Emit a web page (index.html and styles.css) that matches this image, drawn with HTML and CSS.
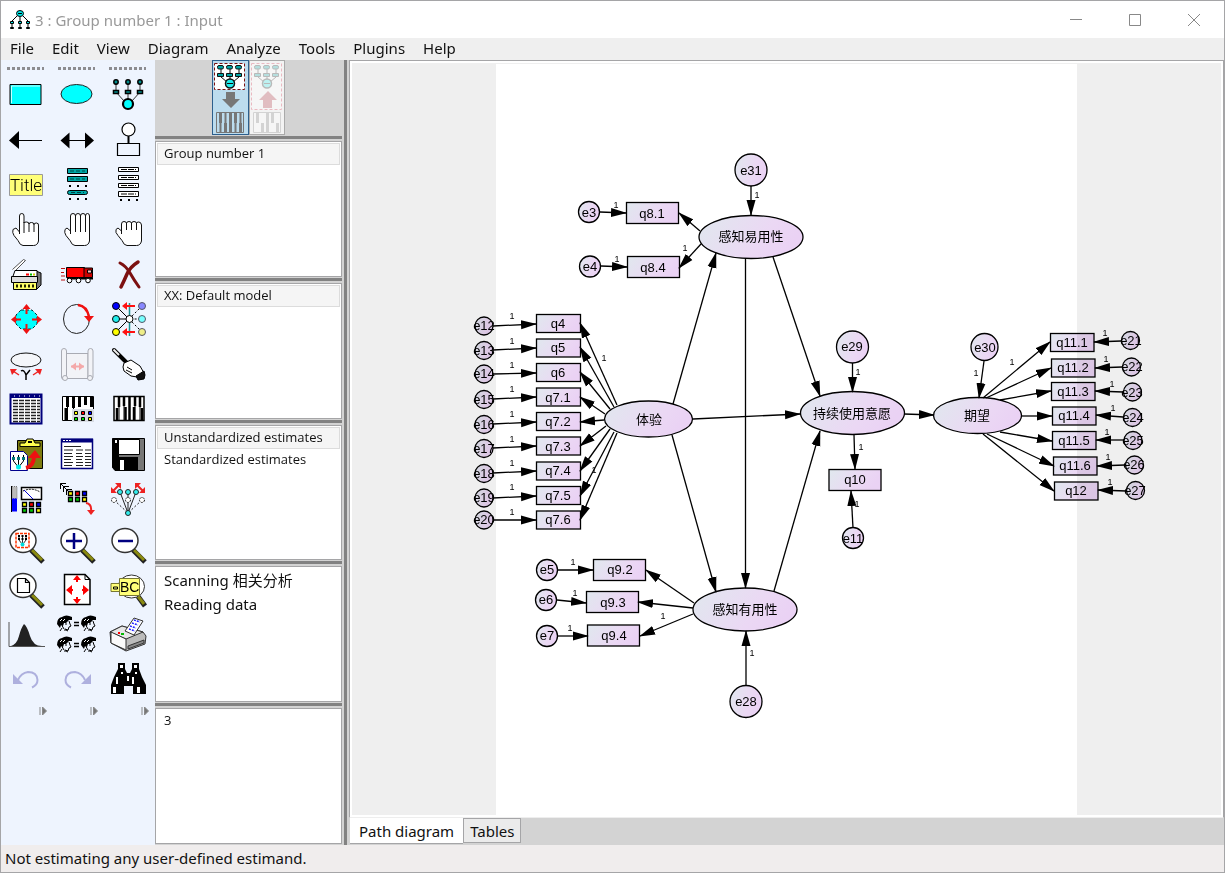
FILE: index.html
```html
<!DOCTYPE html>
<html lang="en">
<head>
  <meta charset="UTF-8">
  <meta name="viewport" content="width=device-width, initial-scale=1.0">
  <title>3 : Group number 1 : Input</title>
  <link rel="stylesheet" href="styles.css">
</head>
<body>
  <div class="window">
    <header class="titlebar">
      <svg class="app-icon" width="22" height="22" viewBox="0 0 22 22" fill="#00e5e5" stroke="#000">
        <path d="M8 7L3 12M11 8v5M14 7l5 5M3 14v5M11 14v5M19 14v5" fill="none"/>
        <ellipse cx="11" cy="4.500" rx="3.500" ry="3"/><path d="M9 4.500h4"/>
        <path d="M1.500 12.500h3v2h-3zM9.500 12.500h3v2h-3zM17.500 12.500h3v2h-3z"/>
        <path d="M1.500 18.500h3v1h-3zM9.500 18.500h3v1h-3zM17.500 18.500h3v1h-3z"/>
      </svg>
      <h1>3 : Group number 1 : Input</h1>
      <div class="win-buttons">
        <button aria-label="Minimize"><svg width="14" height="14"><path d="M1 6.500h12"/></svg></button>
        <button aria-label="Maximize"><svg width="14" height="14"><path d="M1.500 1.500h11v11h-11z"/></svg></button>
        <button aria-label="Close"><svg width="14" height="14"><path d="M1 1l12 12M13 1L1 13"/></svg></button>
      </div>
    </header>
    <nav class="menu">
      <button>File</button>
      <button>Edit</button>
      <button>View</button>
      <button>Diagram</button>
      <button>Analyze</button>
      <button>Tools</button>
      <button>Plugins</button>
      <button>Help</button>
    </nav>

    <main class="work">
      <aside class="toolbox">
        <div class="grips"><i></i><i></i><i></i></div>
        <div class="tools">
          <button aria-label="Observed variable"><svg viewBox="0 0 40 40"><path d="M4 9.500h31v20H4z" fill="#0ff" stroke="#000"/><path d="M5.500 28V11H34" fill="none" stroke="#cff"/></svg></button>
          <button aria-label="Unobserved variable"><svg viewBox="0 0 40 40"><ellipse cx="19.500" cy="19" rx="15.500" ry="9.500" fill="#0ff" stroke="#222"/></svg></button>
          <button aria-label="Latent variable with indicators"><svg viewBox="0 0 40 40" stroke="#000"><path d="M8 7v10l8 9M20 7v18M32 7v10l-8 9" fill="none" stroke="#333"/><g fill="#008c8c" stroke-width="1.500"><circle cx="8" cy="7" r="2.200"/><circle cx="20" cy="7" r="2.200"/><circle cx="32" cy="7" r="2.200"/><path d="M5.500 15.500h5v3h-5zM17.500 15.500h5v3h-5zM29.500 15.500h5v3h-5z"/></g><circle cx="20" cy="29" r="5" fill="#0ff" stroke-width="2.200"/></svg></button>

          <button aria-label="Path"><svg viewBox="0 0 40 40"><path d="M10 20.500h26" stroke="#000"/><path d="M3 20.500L13 11v18z"/></svg></button>
          <button aria-label="Covariance"><svg viewBox="0 0 40 40"><path d="M10 20.500h20" stroke="#000"/><path d="M3.500 20.500l9-8v16zM37 20.500l-9-8v16z"/></svg></button>
          <button aria-label="Error variable"><svg viewBox="0 0 40 40" fill="#fff" stroke="#000" stroke-width="1.200"><circle cx="20.500" cy="9.500" r="6.500"/><path d="M20.500 16v8" stroke-width="2"/><path d="M9.500 23.500h22v12h-22z" fill="#eef4fe"/></svg></button>

          <button aria-label="Figure caption"><svg viewBox="0 0 40 40"><path d="M3.500 9.500h33v21h-33z" fill="#ffff78" stroke="#999"/><text class="caption-text" x="20" y="26" text-anchor="middle">Title</text></svg></button>
          <button aria-label="Variables in model"><svg viewBox="0 0 40 40" fill="#00a8a8" stroke="#000"><path d="M10.500 3.500h20v5h-20zM10.500 11.500h20v5h-20z"/><rect x="10.500" y="25.500" width="20" height="4" rx="2"/><path d="M12 21h18M12 34h18" stroke-width="2" stroke-dasharray="2 6"/><path d="M13 6h15M13 14h15M14 27.500h13" stroke="#044" stroke-dasharray="4 2"/></svg></button>
          <button aria-label="Variables in data set"><svg viewBox="0 0 40 40" fill="#fff" stroke="#000"><path d="M10.500 2.500h20v4h-20zM10.500 10.500h20v4h-20zM10.500 18.500h20v4h-20zM10.500 26.500h20v5h-20z"/><path d="M13 4.500h15M13 12.500h15M13 20.500h15M13 29h15" stroke-dasharray="6 1"/><path d="M12 35h18" stroke-width="2" stroke-dasharray="2 6"/></svg></button>

          <button aria-label="Select one object"><svg viewBox="0 0 40 40" fill="#fff" stroke="#111"><path d="M13.500 24V6q0-2.500 2.300-2.500T18 6v7q0-1 2.500-1t2.500 2q0-1.500 2.500-1.500t2.500 2q0-1.500 2.500-1.500T32.500 16v15q-1 4.500-5 4.500H17q-3 0-5-5l-4-5q-2-3-1-6l3-1.500 3.500 4M18 12v11M23 13v9M28 14v8"/></svg></button>
          <button aria-label="Select all objects"><svg viewBox="0 0 40 40" fill="#fff" stroke="#111"><path d="M13.500 24V6q0-2.500 2.500-2.500T18.500 6q0-2.500 2.500-2.500T23.500 6q0-2.500 2.500-2.500T28.500 6q0-2.500 2-2.500T32.500 6v25q-1 4.500-5 4.500H18q-3 0-5-5l-4-5q-2-3-1-6l2-1.500 3.500 3M18.500 6v16M23.500 6v16M28.500 6v16"/></svg></button>
          <button aria-label="Deselect all objects"><svg viewBox="0 0 40 40" fill="#fff" stroke="#111"><path d="M13.500 24V14q0-2.500 2.500-2.500t2.500 2q0-2 2.500-2t2.500 2q0-2 2.500-2t2.500 2q0-1.500 2.300-1.500T33.500 15v16q-1 4.500-5 4.500H19q-3 0-5-5l-4-5q-3-3-2-6l2-1.500 3.500 3M18.500 13v7M23.500 13v7M28.500 13v7"/></svg></button>

          <button aria-label="Duplicate objects"><svg viewBox="0 0 40 40" stroke="#000"><path d="M30 16l5 2v12l-5 5" fill="#777"/><path d="M6.500 14.500l11-10 2 1-10 10" fill="#fff" stroke="#555"/><path d="M5.500 25.500L9 15.500h22v10z" fill="#fff"/><path d="M5.500 21.500h26v6h-26z" fill="#ddd"/><path d="M7.500 27.500h23v7h-23z" fill="#ff6"/><path d="M10 31h18" stroke="#220" stroke-width="3" stroke-dasharray="2 2"/><path d="M20 19.500h3" stroke="red" stroke-width="2"/><path d="M24 19.500h2" stroke="#0b0" stroke-width="2"/><path d="M27 19.500h2" stroke="#cc0" stroke-width="2"/></svg></button>
          <button aria-label="Move objects"><svg viewBox="0 0 40 40" stroke="#000"><path d="M9.500 12.500h18v10h-18z" fill="#f00"/><path d="M27 13h8.500v9.500H27z" fill="#c00"/><path d="M30.500 15h4v3h-4z" fill="#fbb"/><path d="M10 23.500h26" stroke-width="2"/><g fill="#fff"><circle cx="12.500" cy="25.500" r="2.300"/><circle cx="21.500" cy="25.500" r="2.300"/><circle cx="31" cy="25.500" r="2.300"/></g><path d="M4 13.500h4M4 17.500h3M4 21h4M4 25h4" stroke="#b11"/></svg></button>
          <button aria-label="Erase objects"><svg viewBox="0 0 40 40" fill="none" stroke="#7c1010" stroke-linecap="round"><path d="M12 8q6 3 10 10t9 14" stroke-width="3"/><path d="M30 7q-8 5-11 12t-6 13" stroke-width="3.500"/></svg></button>

          <button aria-label="Change the shape of objects"><svg viewBox="0 0 40 40"><path d="M15 10h11l5 5v9l-5 5H15l-5-5v-9z" fill="#0ff" stroke="#033" stroke-dasharray="3 2"/><g fill="#e11"><path d="M20.500 4l4 5h-3v5h-2V9h-3zM20.500 34l4-5h-3v-5h-2v5h-3zM5 19.500l5-4v3h5v2h-5v3zM36 19.500l-5-4v3h-5v2h5v3z"/></g></svg></button>
          <button aria-label="Rotate indicators"><svg viewBox="0 0 40 40" fill="none"><ellipse cx="19.500" cy="19" rx="13" ry="14.500" stroke="#222"/><path d="M21 5q9 1 11 12" stroke="#f01010" stroke-width="2.500"/><path d="M27 16h10l-5 6z" fill="#f01010"/></svg></button>
          <button aria-label="Reflect indicators"><svg viewBox="0 0 40 40" stroke="#000"><path d="M21.500 3v33" stroke="#1a9090" stroke-width="1.500"/><path d="M8 6l13 13M8 19h13M8 32l13-13"/><path d="M34 6L21 19h13M34 32L21 19" fill="none" stroke-dasharray="2 2"/><circle cx="8" cy="6" r="3.500" fill="#00f"/><circle cx="8" cy="19" r="3.500" fill="#2ee"/><circle cx="8" cy="32" r="3.500" fill="#ff0"/><g stroke="#556"><circle cx="34" cy="6" r="3.500" fill="#88f"/><circle cx="34" cy="19" r="3.500" fill="#7ff"/><circle cx="34" cy="32" r="3.500" fill="#ee8"/></g><circle cx="21.500" cy="19" r="3.500" fill="#fff"/><path d="M27 6H17M27 32H17" stroke="#f11" stroke-width="2"/><path d="M14 6l5-4v8zM14 32l5-4v8z" fill="#f11" stroke="none"/></svg></button>

          <button aria-label="Move parameter values"><svg viewBox="0 0 40 40"><ellipse cx="20" cy="15" rx="15" ry="7" fill="#f4f6fa" stroke="#111"/><path d="M15 26q3-2 5 4l4-5M20 30v5" fill="none" stroke="#000" stroke-width="1.500"/><path d="M13 30l-6-4M27 30l6-4" stroke="#e22" stroke-width="1.500"/><path d="M4 24h7l-5 6zM36 24h-7l5 6z" fill="#e22"/></svg></button>
          <button aria-label="Reposition diagram"><svg viewBox="0 0 40 40" fill="#f2f3f7" stroke="#a9abb3"><path d="M9 8.500h22v25H9z"/><rect x="4.500" y="3.500" width="5" height="31" rx="2.500"/><rect x="31" y="3.500" width="5" height="31" rx="2.500"/><circle cx="8" cy="33" r="2.500"/><circle cx="33" cy="33" r="2.500"/><path d="M14 21.500h13" stroke="#f4a9a9" stroke-width="2"/><path d="M14 21.500l5-4v8zM27 21.500l-5-4v8z" fill="#f4a9a9" stroke="none"/></svg></button>
          <button aria-label="Touch up a variable"><svg viewBox="0 0 40 40" stroke="#000"><path d="M6 5l13 13" stroke-width="4" stroke-linecap="round"/><path d="M5.500 4.500L11 10" stroke="#eee" stroke-width="2"/><path d="M16 18l7-3 9 6 4 7-7 4-6-1-7-5-1-4z" fill="#fff"/><path d="M19 22l5 3M18 25l6 3"/><path d="M28 31l8-5q2 4 0 8l-6 1z" fill="#111"/></svg></button>

          <button aria-label="Select data files"><svg viewBox="0 0 40 40"><path d="M4.500 4.500h31v29h-31z" fill="#fff" stroke="#00007c" stroke-width="2"/><path d="M4 6h32" stroke="#00007c" stroke-width="4"/><path d="M8 6h26" stroke="#fff" stroke-dasharray="1 4"/><path d="M7 10.500h27M7 13.500h27M7 16.500h27M7 19.500h27M7 22.500h27M7 25.500h27M7 28.500h27M7 31.500h27" stroke="#222" stroke-width="1.300" stroke-dasharray="5 1"/></svg></button>
          <button aria-label="Analysis properties"><svg viewBox="0 0 40 40"><path d="M5.500 6.500h31v24h-31z" fill="#fff" stroke="#000"/><path d="M10.500 7v24M16.500 7v24M22.500 7v8M28.500 7v8M34.500 7v8" stroke="#000"/><path d="M10.500 7v10M9 18v13M16.500 7v11M22.500 7v10M28.500 7v8M34.500 7v10" stroke="#000" stroke-width="3"/><path d="M15 19h22v13H15z" fill="#d8dce4"/><g stroke="#000"><path d="M17.500 21.500h3v3h-3z" fill="#ff0"/><path d="M24.500 21.500h3v3h-3z" fill="#f00"/><path d="M31.500 21.500h3v3h-3z" fill="#00f"/><path d="M17.500 27.500h3v3h-3zM24.500 27.500h3v3h-3z" fill="#0d0"/><path d="M31.500 27.500h3v3h-3z" fill="#ff0"/></g></svg></button>
          <button aria-label="Calculate estimates"><svg viewBox="0 0 40 40"><path d="M6 6.500h30v24H6z" fill="#fff" stroke="#000" stroke-width="1.500"/><path d="M11 7v24M16 7v24M21.500 7v24M27 7v24M32 7v24" stroke="#000"/><path d="M11 7v10M9 18v13M16 7v9M17.500 17v14M21.500 7v24M27 7v9M26 17v14M32 7v10M34 18v13" stroke="#000" stroke-width="2.500"/></svg></button>

          <button aria-label="Copy the path diagram"><svg viewBox="0 0 40 40" stroke="#000"><path d="M11.500 5.500h25v28h-25z" fill="#7d7d10"/><path d="M14 11.500V8h5l2-4h6l2 4h5v3.500z" fill="#ffff50"/><path d="M22 7h4" stroke-width="2"/><path d="M4.500 16.500h13l4 4v15h-17z" fill="#fff" stroke="#00008c"/><path d="M7.500 20v6l4 5M12.500 20v10M17.500 20v6l-4 5" fill="none"/><path d="M6 22h3v3H6zM11 22h3v3h-3zM16 22h3v3h-3z" fill="#077" stroke="none"/><circle cx="12.500" cy="32" r="2.500" fill="#0ee" stroke="none"/><path d="M20 33q8-2 8-12" fill="none" stroke="#e11" stroke-width="4"/><path d="M22 23l7-8 6 8z" fill="#e11" stroke="none"/></svg></button>
          <button aria-label="View text"><svg viewBox="0 0 40 40"><path d="M4.500 4.500h31v29h-31z" fill="#fff" stroke="#00007c" stroke-width="1.500"/><path d="M4 5.500h32" stroke="#00007c" stroke-width="4"/><path d="M6 5.500h8" stroke="#fff" stroke-dasharray="2 1"/><path d="M7 11.500h17M7 15h9M19 15h7M28 15h6M7 18.500h8M19 18.500h6M28 18.500h6M7 21.500h9M19 21.500h7M28 21.500h6M7 24.500h7M19 24.500h6M28 24.500h6M7 27.500h9M19 27.500h7M28 27.500h6M7 30.500h8M19 30.500h7M28 30.500h6" stroke="#222" stroke-width="1.200"/></svg></button>
          <button aria-label="Save the path diagram"><svg viewBox="0 0 40 40"><path d="M4.500 3.500h32v32H7l-2.500-3z" fill="#777" stroke="#000"/><path d="M4.500 3.500H11v32H7l-2.500-3z"/><path d="M10.500 4.500h21v15h-21z" fill="#fff" stroke="#000"/><path d="M10 22h20v14H10z"/><path d="M12 25h4v10h-4z" fill="#fff"/><path d="M7 5h2v3H7z" fill="#fff"/></svg></button>

          <button aria-label="Object properties"><svg viewBox="0 0 40 40" stroke="#000"><path d="M6 6.500h5v12H6z" fill="#bbb" stroke="#777" stroke-dasharray="1 1"/><path d="M6 18.500h5v13H6z" fill="#00f" stroke="none"/><path d="M5.500 6v26"/><path d="M15.500 7.500h20v12h-20z" fill="#fff" stroke-width="1.500"/><path d="M17 11q9-4 17 1" fill="none" stroke-dasharray="2 1"/><path d="M18 10l9 9" stroke="#00c"/><g stroke-width="1.300"><path d="M16.500 22.500h4v4h-4z" fill="#ff0"/><path d="M23.500 22.500h4v4h-4z" fill="#f00"/><path d="M30.500 22.500h4v4h-4z" fill="#00f"/><path d="M16.500 28.500h4v4h-4zM23.500 28.500h4v4h-4z" fill="#0c0"/><path d="M30.500 28.500h4v4h-4z" fill="#ff0"/></g></svg></button>
          <button aria-label="Drag properties"><svg viewBox="0 0 40 40" stroke="#000"><path d="M3.500 9V3.500H9M6.500 12V6.500H12M9.500 15V9.500H15M3.500 3.500l5 5M7 7l5 5" fill="none"/><g stroke-width="1.300"><path d="M11.500 11.500h4v4h-4z" fill="#ff0"/><path d="M18.500 11.500h4v4h-4z" fill="#f00"/><path d="M25.500 11.500h4v4h-4z" fill="#00f"/><path d="M11.500 17.500h4v4h-4zM18.500 17.500h4v4h-4z" fill="#0c0"/><path d="M25.500 17.500h4v4h-4z" fill="#ff0"/></g><path d="M29 23q6 1 5 8" fill="none" stroke="#e22" stroke-width="2"/><path d="M30 30h8l-4 5z" fill="#e22" stroke="none"/></svg></button>
          <button aria-label="Preserve symmetries"><svg viewBox="0 0 40 40" stroke="#222"><path d="M12 12l8 21 8-21M20 12v21" fill="none"/><path d="M6 20l14 13 14-13" fill="none" stroke-dasharray="2 2"/><g fill="#3ee"><circle cx="12" cy="12" r="2.500"/><circle cx="20" cy="12" r="2.500"/><circle cx="28" cy="12" r="2.500"/><circle cx="20" cy="33" r="2.500"/></g><g fill="#fff" stroke-dasharray="2 1"><circle cx="6" cy="20" r="2.500"/><circle cx="20" cy="20" r="2.500"/><circle cx="34" cy="20" r="2.500"/></g><path d="M5 11l6-6M35 11l-6-6" stroke="#e22" stroke-width="2"/><path d="M3 7v6h6zM7 3h6v6zM37 7v6h-6zM33 3h-6v6z" fill="#e22" stroke="none"/></svg></button>

          <button aria-label="Zoom in on an area"><svg viewBox="0 0 40 40"><path d="M25 25l12 12" stroke="#222" stroke-width="5"/><path d="M26 25l10 10" stroke="#8a8a10" stroke-width="3"/><ellipse cx="17" cy="15.500" rx="13" ry="12" fill="#fff" stroke="#333" stroke-width="1.500"/><path d="M10 8.500h13v14H10z" fill="#fff" stroke="#f30" stroke-width="1.500" stroke-dasharray="3 1"/><path d="M13 11v4l3 4M16.500 11v8M20 11v4l-3 4" fill="none" stroke="#333"/><path d="M12 11h9M12 14h9" stroke="#000" stroke-width="2" stroke-dasharray="2 1.500"/><circle cx="16.500" cy="19.500" r="2" fill="#0dd"/></svg></button>
          <button aria-label="Zoom in"><svg viewBox="0 0 40 40"><path d="M25 25l12 12" stroke="#222" stroke-width="5"/><path d="M26 25l10 10" stroke="#8a8a10" stroke-width="3"/><ellipse cx="17" cy="15.500" rx="13" ry="12" fill="#fff" stroke="#333" stroke-width="1.500"/><path d="M9 16h16M17 8v16" stroke="#000080" stroke-width="2.500"/></svg></button>
          <button aria-label="Zoom out"><svg viewBox="0 0 40 40"><path d="M25 25l12 12" stroke="#222" stroke-width="5"/><path d="M26 25l10 10" stroke="#8a8a10" stroke-width="3"/><ellipse cx="17" cy="15.500" rx="13" ry="12" fill="#fff" stroke="#333" stroke-width="1.500"/><path d="M10 16h15" stroke="#000080" stroke-width="2.500"/></svg></button>

          <button aria-label="Show whole page"><svg viewBox="0 0 40 40"><path d="M25 25l12 12" stroke="#222" stroke-width="5"/><path d="M26 25l10 10" stroke="#8a8a10" stroke-width="3"/><ellipse cx="17" cy="15.500" rx="13" ry="12" fill="#fff" stroke="#333" stroke-width="1.500"/><path d="M11.500 8.500h8l4 4v10h-12zM19.500 8.500v4h4" fill="#fff" stroke="#000" stroke-width="1.200"/></svg></button>
          <button aria-label="Resize to fit page"><svg viewBox="0 0 40 40"><path d="M7.500 4.500H28l5 5v25H7.500z" fill="#fff" stroke="#000" stroke-width="1.500"/><path d="M28 4.500v5h5" fill="none" stroke="#000"/><path d="M20 5l4 5h-8zM20 34l4-5h-8zM9 20l6-5v10zM32 20l-6-5v10z" fill="#f00"/><path d="M20 8v4M20 27v4M12 20h4M25 20h4" stroke="#f00" stroke-width="2"/></svg></button>
          <button aria-label="Examine with the loupe"><svg viewBox="0 0 40 40"><path d="M29 25l8 11" stroke="#222" stroke-width="5"/><path d="M29 25l7 9" stroke="#8a8a10" stroke-width="3"/><ellipse cx="23.500" cy="16.500" rx="13" ry="11.500" fill="#fff" stroke="#333"/><path d="M3 13.500h9v8H3z" fill="#ff7" stroke="#773"/><path d="M5.500 19v-2h4v2z" fill="none" stroke="#000"/><path d="M11.500 8.500h20v17h-20z" fill="#ffff78" stroke="#773"/><text class="loupe-text" x="12" y="22">BC</text></svg></button>

          <button aria-label="Bayesian"><svg viewBox="0 0 40 40"><path d="M3 7v24.500h36" fill="none" stroke="#555"/><path d="M5 31q6-2 8-10t5-12q3 2 6 12t12 10z" fill="#222"/></svg></button>
          <button aria-label="Multiple group analysis">
            <svg viewBox="0 0 40 40">
              <defs>
                <g id="face"><path d="M4 6q1 6 3 8M12 6l1 3 1 2-2 1-1 3-3-1v2" fill="none" stroke="#000"/><path d="M0 9q0-6 5-7 4-3 10 0l0 3-3 0-3 3-2 0-1 3-2-1-1 3z"/><path d="M3 16l2-3M11 16l-2-1M8 9h2" stroke="#000"/><path d="M3 6l2-2M6 6l2-2" stroke="#fff"/></g>
              </defs>
              <use href="#face" x="0" y="0"/><use href="#face" x="24" y="0"/>
              <use href="#face" x="0" y="21"/><use href="#face" x="24" y="21"/>
              <path d="M17 7.500h5M17 10.500h5M17 28.500h5M17 31.500h5" stroke="#000" stroke-width="1.300"/>
            </svg>
          </button>
          <button aria-label="Print"><svg viewBox="0 0 40 40" stroke="#333"><path d="M2 17l12-6 21 6 3 4-1 8-19 7L3 28z" fill="#bbb"/><path d="M2 17l12-6 21 6-17 7z" fill="#e6e6e6"/><path d="M18 24v11L3 28V17z" fill="#fafafa"/><path d="M17 16L26 3l9 3-9 14z" fill="#fff"/><path d="M24 8l6 2M22 11l6 2M21 14l6 2M26 5l6 2" stroke="#22f" stroke-width="1.500" stroke-dasharray="2 1"/><path d="M10 18h2" stroke="red" stroke-width="2"/><path d="M13 19h3" stroke="#0b0" stroke-width="2"/><path d="M20 31l16-6v3l-16 6z" fill="#888"/></svg></button>

          <button aria-label="Undo" disabled><svg viewBox="0 0 40 40" fill="none"><path d="M12 20q3-7 10-8 9 0 9.500 8 0 5-5.500 7.500" stroke="#aeb0de" stroke-width="2"/><path d="M7 14v10h10z" fill="#aeb0de"/></svg></button>
          <button aria-label="Redo" disabled><svg viewBox="0 0 40 40" fill="none"><path d="M28 20q-3-7-10-8-9 0-9.500 8 0 5 5.500 7.500" stroke="#aeb0de" stroke-width="2"/><path d="M34 14v10H24z" fill="#aeb0de"/></svg></button>
          <button aria-label="Search"><svg viewBox="0 0 40 40"><path d="M10 3h7v6l2 4h3l2-4V3h7v6l3 8 4 8v9H25v-8h-9v8H3v-9l3-8 4-8z"/><path d="M12 5h3v3h-3zM26 5h3v3h-3zM13 12h2v2h-2zM27 12h2v2h-2zM8 17h2v7H8zM19 16h2v5h-2zM24 17h2v7h-2zM5 27h3v6H5zM29 27h3v6h-3z" fill="#fff"/></svg></button>
        </div>
        <div class="more">
          <svg viewBox="0 0 8 8"><path d="M1 0v8M3.500 0v8L7.500 4z"/></svg>
          <svg viewBox="0 0 8 8"><path d="M1 0v8M3.500 0v8L7.500 4z"/></svg>
          <svg viewBox="0 0 8 8"><path d="M1 0v8M3.500 0v8L7.500 4z"/></svg>
        </div>
      </aside>

      <section class="panels">
        <div class="switch">
          <button class="active" aria-label="View the input path diagram">
            <svg viewBox="0 0 34 72" stroke="#111">
              <path d="M1.500 1.500h30v26h-30z" fill="#fff" stroke="#7c1010" stroke-dasharray="3 2"/>
              <path d="M8 5v10l6 5M17 5v12M26 5v10l-6 5" fill="none"/>
              <g fill="#00a4a4"><rect x="4.500" y="3.500" width="6" height="3.500" rx="1.500"/><rect x="13.500" y="3.500" width="6" height="3.500" rx="1.500"/><rect x="22.500" y="3.500" width="6" height="3.500" rx="1.500"/><path d="M4.500 11.500h6v3h-6zM13.500 11.500h6v3h-6zM22.500 11.500h6v3h-6z"/></g>
              <circle cx="17" cy="21.500" r="4.500" fill="#2ee" stroke-width="1.500"/><path d="M14 21.500h6"/>
              <path d="M13 30h9v7h5l-9 9-9-9h4z" fill="#777" stroke="none"/>
              <path d="M3.500 50.500h27v20h-27z" fill="#bcdcee" stroke="#777"/>
              <path d="M7.500 51v10M12.500 61v9M17.500 51v20M22.500 51v10M27.500 61v10" stroke="#777" stroke-width="3"/><path d="M7.500 51v20M12.500 51v20M17.500 51v20M22.500 51v20M27.500 51v20" stroke="#777" stroke-width="2"/>
            </svg>
          </button>
          <button disabled aria-label="View the output path diagram">
            <svg viewBox="0 0 34 72" stroke="#111">
              <path d="M1.500 1.500h30v46h-30z" fill="#fff" stroke="#d01030" stroke-dasharray="3 2"/>
              <path d="M8 5v10l6 5M17 5v12M26 5v10l-6 5" fill="none"/>
              <g fill="#00a4a4"><rect x="4.500" y="3.500" width="6" height="3.500" rx="1.500"/><rect x="13.500" y="3.500" width="6" height="3.500" rx="1.500"/><rect x="22.500" y="3.500" width="6" height="3.500" rx="1.500"/><path d="M4.500 11.500h6v3h-6zM13.500 11.500h6v3h-6zM22.500 11.500h6v3h-6z"/></g>
              <circle cx="17" cy="21.500" r="4.500" fill="#2ee" stroke-width="1.500"/><path d="M14 21.500h6"/>
              <path d="M13 46h9v-8h5l-9-9-9 9h4z" fill="#b02030" stroke="none"/>
              <path d="M3.500 50.500h27v20h-27z" fill="#fff" stroke="#777"/>
              <path d="M7.500 51v10M12.500 61v9M17.500 51v20M22.500 51v10M27.500 61v10" stroke="#777" stroke-width="3"/>
            </svg>
          </button>
        </div>
        <div class="pane"><ul><li class="selected">Group number 1</li></ul></div>
        <div class="pane"><ul><li class="selected">XX: Default model</li></ul></div>
        <div class="pane"><ul><li class="selected">Unstandardized estimates</li><li>Standardized estimates</li></ul></div>
        <div class="pane"><ul class="log"><li>Scanning 相关分析</li><li>Reading data</li></ul></div>
        <div class="pane"><ul><li>3</li></ul></div>
      </section>

      <section class="document">
        <div class="canvas">
          <svg class="diagram" viewBox="352 64 869 751">
            <defs>
              <linearGradient id="fill" x1="0" y1="0" x2="1" y2="0.300">
                <stop offset="0" stop-color="#e0e8ee"/>
                <stop offset="0.700" stop-color="#ebd8f4"/>
                <stop offset="1" stop-color="#ead2f4"/>
              </linearGradient>
              <marker id="head" markerUnits="userSpaceOnUse" markerWidth="16" markerHeight="10" refX="15" refY="5" orient="auto">
                <path d="M0 0.500L16 5L0 9.500z"/>
              </marker>
            </defs>
            <rect class="page" x="496" y="64" width="581" height="751"/>

            <g class="paths">
              <!-- structural paths -->
              <path d="M673 404L716 253"/>
              <path d="M693 419L800 414"/>
              <path d="M672 435L716 592"/>
              <path d="M745.500 258V588"/>
              <path d="M773 257L820 396"/>
              <path d="M774 591L820 431"/>
              <path d="M904 414L934 415"/>
              <!-- loadings -->
              <path d="M700 231L679 213"/>
              <path d="M701 244L679 268"/>
              <path d="M617 405L580 323"/>
              <path d="M614 407L580 347"/>
              <path d="M610 409L580 372"/>
              <path d="M605 414L580 397"/>
              <path d="M604 420L580 422"/>
              <path d="M606 426L580 446"/>
              <path d="M610 429L580 471"/>
              <path d="M614 432L580 496"/>
              <path d="M617 433L580 520"/>
              <path d="M694 603L646 570"/>
              <path d="M693 608L638 602"/>
              <path d="M693 614L640 636"/>
              <path d="M854 435L855 469"/>
              <path d="M983 398L1050 342"/>
              <path d="M986 398L1051 368"/>
              <path d="M1000 400L1051 391"/>
              <path d="M1021 416H1052"/>
              <path d="M1000 432L1052 441"/>
              <path d="M987 434L1054 466"/>
              <path d="M983 434L1054 491"/>
              <!-- error terms -->
              <path d="M751 186V215"/>
              <path d="M852.500 363V392"/>
              <path d="M984 361L979 398"/>
              <path d="M746 686V631"/>
              <path d="M853 528L851 491"/>
              <path d="M600 212L626 213"/>
              <path d="M601 266L627 267"/>
              <path d="M557 570H593"/>
              <path d="M557 600L586 603"/>
              <path d="M557 636H588"/>
              <path d="M493 326L536 324"/>
              <path d="M493 350L536 348"/>
              <path d="M493 374L536 373"/>
              <path d="M493 399L536 397"/>
              <path d="M493 424L536 422"/>
              <path d="M493 448L536 446"/>
              <path d="M493 473L536 471"/>
              <path d="M493 498L536 496"/>
              <path d="M493 520H536"/>
              <path d="M1121 341L1094 342"/>
              <path d="M1122 367L1095 368"/>
              <path d="M1123 392L1095 391"/>
              <path d="M1123 417L1096 415"/>
              <path d="M1124 440H1096"/>
              <path d="M1125 465L1097 466"/>
              <path d="M1126 491L1098 490"/>
            </g>

            <g class="nodes">
              <ellipse cx="751" cy="237" rx="52" ry="21.500"/>
              <ellipse cx="648.500" cy="419" rx="44" ry="18"/>
              <ellipse cx="852.500" cy="413" rx="52" ry="21.500"/>
              <ellipse cx="977.500" cy="415.500" rx="44" ry="18"/>
              <ellipse cx="745" cy="609.500" rx="52" ry="21.500"/>

              <circle cx="751" cy="170" r="16"/>
              <circle cx="852.500" cy="347" r="16"/>
              <circle cx="984.500" cy="347" r="13.500"/>
              <circle cx="746" cy="701.500" r="16"/>
              <circle cx="853" cy="538" r="10.500"/>
              <circle cx="589" cy="212" r="10.500"/>
              <circle cx="590" cy="266.500" r="10.500"/>
              <circle cx="547" cy="570" r="10.500"/>
              <circle cx="546" cy="600" r="10.500"/>
              <circle cx="547" cy="636" r="10.500"/>
              <circle cx="484" cy="326" r="9"/>
              <circle cx="484" cy="350.500" r="9"/>
              <circle cx="484" cy="374" r="9"/>
              <circle cx="484" cy="399.500" r="9"/>
              <circle cx="484" cy="424.500" r="9"/>
              <circle cx="484" cy="448.500" r="9"/>
              <circle cx="484" cy="473.500" r="9"/>
              <circle cx="484" cy="498" r="9"/>
              <circle cx="484" cy="520" r="9"/>
              <circle cx="1130.500" cy="340.500" r="9"/>
              <circle cx="1131.500" cy="367" r="9"/>
              <circle cx="1132.500" cy="392" r="9"/>
              <circle cx="1132.500" cy="417.500" r="9"/>
              <circle cx="1133" cy="440.500" r="9"/>
              <circle cx="1134.500" cy="465" r="9"/>
              <circle cx="1135.500" cy="490.500" r="9"/>

              <rect x="626.500" y="202.500" width="52" height="21"/>
              <rect x="627.500" y="256.500" width="52" height="21"/>
              <rect x="593.500" y="559.500" width="52" height="21"/>
              <rect x="586.500" y="591.500" width="52" height="21"/>
              <rect x="587.500" y="625" width="52" height="21"/>
              <rect x="829" y="469.500" width="52" height="21"/>
              <rect x="536.500" y="314.500" width="44" height="18"/>
              <rect x="536.500" y="339" width="44" height="18"/>
              <rect x="536.500" y="363.500" width="44" height="18"/>
              <rect x="536.500" y="388" width="44" height="18"/>
              <rect x="536.500" y="412.500" width="44" height="18"/>
              <rect x="536.500" y="437" width="44" height="18"/>
              <rect x="536.500" y="462" width="44" height="18"/>
              <rect x="536.500" y="486.500" width="44" height="18"/>
              <rect x="536.500" y="511" width="44" height="18"/>
              <rect x="1050.500" y="333.500" width="43.500" height="18"/>
              <rect x="1051.500" y="359" width="43.500" height="18"/>
              <rect x="1051.500" y="382.500" width="43.500" height="18"/>
              <rect x="1052.500" y="407" width="43.500" height="18"/>
              <rect x="1052.500" y="431.500" width="43.500" height="18"/>
              <rect x="1053.500" y="457" width="43.500" height="18"/>
              <rect x="1054.500" y="482" width="43.500" height="18"/>
            </g>

            <g class="names">
              <text x="751" y="241">感知易用性</text>
              <text x="649" y="424">体验</text>
              <text x="852" y="418">持续使用意愿</text>
              <text x="977" y="420">期望</text>
              <text x="745" y="614">感知有用性</text>
              <text x="751" y="175">e31</text>
              <text x="852" y="351">e29</text>
              <text x="985" y="352">e30</text>
              <text x="746" y="706">e28</text>
              <text x="853" y="543">e11</text>
              <text x="589" y="217">e3</text>
              <text x="590" y="271">e4</text>
              <text x="547" y="574">e5</text>
              <text x="546" y="604">e6</text>
              <text x="547" y="640">e7</text>
              <text x="484" y="330">e12</text>
              <text x="484" y="355">e13</text>
              <text x="484" y="378">e14</text>
              <text x="484" y="404">e15</text>
              <text x="484" y="429">e16</text>
              <text x="484" y="453">e17</text>
              <text x="484" y="478">e18</text>
              <text x="484" y="502">e19</text>
              <text x="484" y="524">e20</text>
              <text x="1131" y="345">e21</text>
              <text x="1132" y="371">e22</text>
              <text x="1132" y="397">e23</text>
              <text x="1133" y="422">e24</text>
              <text x="1133" y="445">e25</text>
              <text x="1134" y="469">e26</text>
              <text x="1135" y="495">e27</text>
              <text x="652" y="218">q8.1</text>
              <text x="653" y="272">q8.4</text>
              <text x="620" y="574">q9.2</text>
              <text x="613" y="607">q9.3</text>
              <text x="614" y="640">q9.4</text>
              <text x="855" y="484">q10</text>
              <text x="558" y="328">q4</text>
              <text x="558" y="352">q5</text>
              <text x="558" y="377">q6</text>
              <text x="558" y="402">q7.1</text>
              <text x="558" y="426">q7.2</text>
              <text x="558" y="451">q7.3</text>
              <text x="558" y="475">q7.4</text>
              <text x="558" y="500">q7.5</text>
              <text x="558" y="524">q7.6</text>
              <text x="1072" y="347">q11.1</text>
              <text x="1073" y="372">q11.2</text>
              <text x="1073" y="396">q11.3</text>
              <text x="1074" y="420">q11.4</text>
              <text x="1074" y="445">q11.5</text>
              <text x="1075" y="470">q11.6</text>
              <text x="1076" y="495">q12</text>
            </g>

            <g class="weights">
              <text x="757" y="198">1</text>
              <text x="616" y="208">1</text>
              <text x="617" y="262">1</text>
              <text x="685" y="251">1</text>
              <text x="512" y="319">1</text>
              <text x="512" y="344">1</text>
              <text x="512" y="368">1</text>
              <text x="512" y="392">1</text>
              <text x="512" y="417">1</text>
              <text x="512" y="442">1</text>
              <text x="512" y="466">1</text>
              <text x="512" y="490">1</text>
              <text x="512" y="515">1</text>
              <text x="604" y="361">1</text>
              <text x="594" y="473">1</text>
              <text x="573" y="565">1</text>
              <text x="575" y="596">1</text>
              <text x="570" y="631">1</text>
              <text x="663" y="619">1</text>
              <text x="752" y="656">1</text>
              <text x="858" y="375">1</text>
              <text x="976" y="376">1</text>
              <text x="861" y="450">1</text>
              <text x="857" y="507">1</text>
              <text x="1012" y="365">1</text>
              <text x="1105" y="336">1</text>
              <text x="1106" y="362">1</text>
              <text x="1112" y="387">1</text>
              <text x="1113" y="411">1</text>
              <text x="1107" y="435">1</text>
              <text x="1108" y="460">1</text>
              <text x="1110" y="485">1</text>
            </g>
          </svg>
        </div>
        <div class="tabs">
          <button class="active">Path diagram</button>
          <button>Tables</button>
        </div>
      </section>
    </main>
    <footer class="status">Not estimating any user-defined estimand.</footer>
  </div>
</body>
</html>
```
FILE: styles.css
```css
* {
  box-sizing: border-box;
}

body {
  margin: 0;
  font-family: "Noto Sans", "Noto Sans CJK SC", sans-serif;
  font-size: 15px;
  color: #111;
}

button {
  margin: 0;
  padding: 0;
  border: 0;
  background: none;
  font: inherit;
  color: inherit;
}

ul {
  margin: 0;
  padding: 0;
  list-style: none;
}

.window {
  display: flex;
  flex-direction: column;
  height: 100vh;
  border: 1px solid #a5a5a7;
  background: #fff;
}

/* title bar */
.titlebar {
  display: flex;
  align-items: center;
  flex: 0 0 37px;
  padding: 0 1px 0 8px;
}

.titlebar h1 {
  margin: 0 0 0 4px;
  font-size: 15px;
  font-weight: normal;
  line-height: 20px;
  color: #999;
}

.win-buttons {
  display: flex;
  margin-left: auto;
}

.win-buttons button {
  width: 59px;
  height: 36px;
}

.win-buttons svg {
  display: block;
  margin: 0 auto;
  fill: none;
  stroke: #888;
}

.menu {
  display: flex;
  flex: 0 0 22px;
  gap: 18px;
  padding-left: 9px;
  background: #efefef;
  line-height: 20px;
}

.menu button {
  height: 20px;
}

.work {
  display: flex;
  flex: 1;
  min-height: 0;
  background: #d3d3d3;
}

/* toolbox */
.toolbox {
  flex: 0 0 154px;
  padding-top: 7px;
  background: #eef4fe;
}

.grips {
  display: grid;
  grid-template-columns: repeat(3, 51px);
  height: 5px;
}

.grips i {
  width: 37px;
  height: 3px;
  margin-left: 6px;
  background: repeating-linear-gradient(90deg, #8c8c90 0 3px, #eef4fe 3px 5px);
}

.tools {
  display: grid;
  grid-template-columns: repeat(3, 51px);
  grid-auto-rows: 45px;
}

.tools button {
  width: 40px;
  height: 40px;
  margin: 3px 0 0 5px;
}

.tools svg {
  display: block;
  width: 40px;
  height: 40px;
}

.caption-text {
  font: 300 17px Roboto, sans-serif;
}

.loupe-text {
  font: 14px "Liberation Sans", sans-serif;
}

.more {
  display: grid;
  grid-template-columns: repeat(3, 51px);
  padding-top: 5px;
}

.more svg {
  width: 8px;
  height: 8px;
  margin-left: 38px;
  fill: #777;
  stroke: #888;
}

/* middle panels */
.panels {
  display: flex;
  flex: 0 0 189px;
  flex-direction: column;
  padding-right: 2px;
  background: #d3d3d3;
}

.switch {
  display: flex;
  flex: 0 0 76px;
  justify-content: center;
  align-items: flex-start;
}

.switch button {
  width: 36px;
  height: 75px;
  border: 1px solid #aaa;
  background: #fff;
}

.switch button.active {
  width: 37px;
  border-color: #2c5f8d;
  background: #bcdcee;
}

.switch button[disabled] {
  background: #f3f3f3;
}

.switch svg {
  display: block;
  width: 34px;
  height: 72px;
}

.switch button[disabled] svg {
  opacity: 0.25;
}

.pane {
  display: flex;
  flex: 1;
  padding: 2px 0 1px;
  border-top: 3px solid #828282;
}

.pane ul {
  flex: 1;
  border: 1px solid #a5a5a7;
  background: #fff;
  padding: 1px;
  font-family: "Open Sans", "Noto Sans CJK SC", sans-serif;
  font-size: 13px;
}

.pane li {
  height: 21px;
  padding: 0 6px;
  border: 1px solid transparent;
  line-height: 18px;
}

.pane li.selected {
  height: 22px;
  border-color: #dcdcdc;
  background: #f5f5f5;
}

.pane .log {
  font-family: "Noto Sans", "Noto Sans CJK SC", sans-serif;
}

.pane .log li {
  height: 24px;
  font-size: 15px;
  line-height: 22px;
}

/* path diagram */
.document {
  display: flex;
  flex: 1;
  flex-direction: column;
  min-width: 0;
  border-left: 3px solid #828282;
  padding-left: 2px;
}

.canvas {
  flex: 1;
  min-height: 0;
  border: 1px solid #a5a5a7;
  border-bottom-color: #eee;
  padding: 3px 2px 2px;
  background: #efefef;
  box-shadow: inset 0 0 0 2px #fff;
}

.diagram {
  display: block;
  width: 100%;
  height: 100%;
}

.page {
  fill: #fff;
}

.paths path {
  fill: none;
  stroke: #000;
  stroke-width: 1.3;
  marker-end: url(#head);
}

.nodes {
  fill: url(#fill);
  stroke: #000;
  stroke-width: 1.3;
}

.nodes > * {
  mix-blend-mode: multiply;
}

.names {
  font: 13px "Liberation Sans", "Noto Sans CJK SC", sans-serif;
  text-anchor: middle;
}

.weights {
  font: 9px "Liberation Sans", sans-serif;
  text-anchor: middle;
}

.tabs {
  display: flex;
  flex: 0 0 27px;
  align-items: flex-start;
  margin-left: 1px;
}

.tabs button {
  height: 25px;
  padding: 0 6px;
  border: 1px solid #a5a5a7;
  background: #ebebeb;
}

.tabs button.active {
  height: 26px;
  padding: 1px 9px 0;
  border-width: 0 0 1px;
  background: #fff;
}

.status {
  flex: 0 0 27px;
  padding-left: 4px;
  background: #f0eded;
  line-height: 26px;
}
```
